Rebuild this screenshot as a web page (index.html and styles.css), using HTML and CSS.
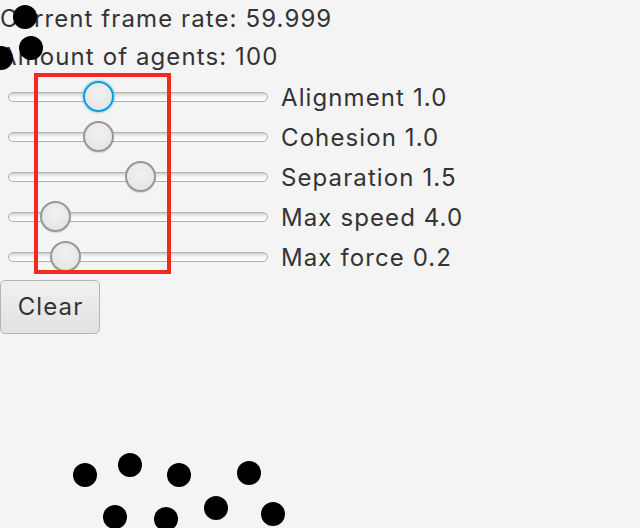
FILE: index.html
```html
<!DOCTYPE html>
<html>
<head>
<meta charset="utf-8">
<link rel="stylesheet" href="styles.css">
</head>
<body>
<div class="app">
  <div class="stat stat-first">Current frame rate: 59.999</div>
  <div class="stat">Amount of agents: 100</div>
  <div class="sliders">
    <div class="srow">
      <div class="slider"><div class="track"></div><div class="thumb focused" style="left:75px"></div></div>
      <span class="label">Alignment 1.0</span>
    </div>
    <div class="srow">
      <div class="slider"><div class="track"></div><div class="thumb" style="left:75px"></div></div>
      <span class="label">Cohesion 1.0</span>
    </div>
    <div class="srow">
      <div class="slider"><div class="track"></div><div class="thumb" style="left:117px"></div></div>
      <span class="label">Separation 1.5</span>
    </div>
    <div class="srow">
      <div class="slider"><div class="track"></div><div class="thumb" style="left:32px"></div></div>
      <span class="label">Max speed 4.0</span>
    </div>
    <div class="srow">
      <div class="slider"><div class="track"></div><div class="thumb" style="left:42px"></div></div>
      <span class="label">Max force 0.2</span>
    </div>
  </div>
  <button class="btn">Clear</button>

  <div class="highlight"></div>
  <div class="agents">
    <span class="dot" style="left:25px;top:17px"></span>
    <span class="dot" style="left:31px;top:48px"></span>
    <span class="dot" style="left:1px;top:58px"></span>
    <span class="dot" style="left:85px;top:475px"></span>
    <span class="dot" style="left:130px;top:465px"></span>
    <span class="dot" style="left:179px;top:475px"></span>
    <span class="dot" style="left:249px;top:473px"></span>
    <span class="dot" style="left:115px;top:517px"></span>
    <span class="dot" style="left:166px;top:519px"></span>
    <span class="dot" style="left:216px;top:508px"></span>
    <span class="dot" style="left:273px;top:514px"></span>
  </div>
</div>
</body>
</html>
```

FILE: styles.css
```css
html, body {
  margin: 0;
  padding: 0;
  background: #f4f4f4;
}
body {
  width: 640px;
  height: 528px;
  overflow: hidden;
  font-family: "Inter", "Liberation Sans", sans-serif;
  font-size: 24px;
  letter-spacing: 1.1px;
  color: #333333;
}
.app {
  position: relative;
  width: 640px;
  height: 528px;
  overflow: hidden;
}
.stat {
  height: 40px;
  line-height: 40px;
  white-space: nowrap;
}
.stat-first {
  height: 37px;
  line-height: 37px;
}
.sliders {
  display: flex;
  flex-direction: column;
}
.srow {
  display: flex;
  align-items: center;
  height: 40px;
}
.slider {
  position: relative;
  width: 260px;
  height: 40px;
  margin-left: 8px;
  margin-right: 13px;
}
.track {
  position: absolute;
  left: 0;
  right: 0;
  top: 15px;
  height: 10px;
  border-radius: 5px;
  border: 1.5px solid #b0b0b0;
  background: linear-gradient(#d2d2d2, #f3f3f3 45%, #ffffff);
  box-sizing: border-box;
}
.thumb {
  position: absolute;
  top: 4px;
  width: 31px;
  height: 31px;
  box-sizing: border-box;
  border-radius: 50%;
  border: 2px solid #979797;
  background: radial-gradient(circle at 50% 40%, #f2f2f2 0%, #e6e6e6 70%, #dcdcdc 100%);
  box-shadow: 0 1px 1px rgba(0,0,0,0.12);
}
.thumb.focused {
  border: 2px solid #0a9ed6;
  box-shadow: 0 0 2px 1px rgba(80,180,230,0.5);
}
.label {
  white-space: nowrap;
}
.btn {
  display: block;
  margin-top: 3px;
  width: 100px;
  height: 54px;
  padding: 0 0 2px 1px;
  font-family: "Inter", "Liberation Sans", sans-serif;
  font-size: 24px;
  letter-spacing: 1.1px;
  color: #333333;
  border: 1.5px solid #b4b4b4;
  border-radius: 5px;
  background: linear-gradient(#f0f0f0, #e2e2e2);
  box-sizing: border-box;
}
.highlight {
  position: absolute;
  left: 34px;
  top: 73px;
  width: 137px;
  height: 201px;
  box-sizing: border-box;
  border: 4px solid #f6291f;
}
.agents {
  position: absolute;
  inset: 0;
}
.dot {
  position: absolute;
  width: 24px;
  height: 24px;
  margin: -12px 0 0 -12px;
  border-radius: 50%;
  background: #000;
}
```
